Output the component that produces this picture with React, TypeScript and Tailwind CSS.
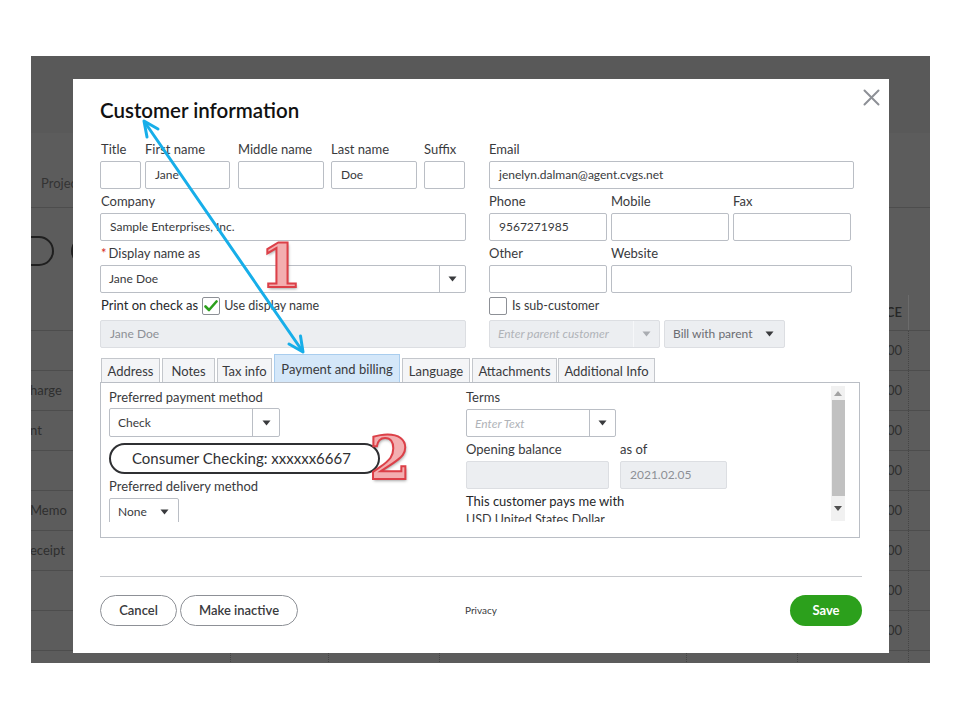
import React from "react";

const FONT = "font-['Lato','Open_Sans',sans-serif]";

function Caret({ light = false }: { light?: boolean }) {
  return (
    <svg width="9" height="6" viewBox="0 0 9 6">
      <path d="M0.5 0.5 L8.5 0.5 L4.5 5.5 Z" fill={light ? "#a9acb1" : "#393a3d"} />
    </svg>
  );
}

function Label({ children, className = "" }: { children: React.ReactNode; className?: string }) {
  return <div className={`h-[16px] leading-[16px] text-[13px] text-[#393a3d] whitespace-nowrap ${className}`}>{children}</div>;
}

function Input({
  children,
  className = "",
  disabled = false,
}: {
  children?: React.ReactNode;
  className?: string;
  disabled?: boolean;
}) {
  return (
    <div
      className={`h-[28px] shrink-0 border rounded-[2px] flex items-center pl-[9px] text-[12px] whitespace-nowrap overflow-hidden ${
        disabled ? "bg-[#eceef1] border-[#dcdee2] text-[#8d9096]" : "bg-white border-[#babec5] text-[#393a3d]"
      } ${className}`}
    >
      {children}
    </div>
  );
}

function Select({
  children,
  className = "",
  btn = "w-[26px]",
  disabled = false,
  lightCaret = false,
  divider = true,
}: {
  children?: React.ReactNode;
  className?: string;
  btn?: string;
  disabled?: boolean;
  lightCaret?: boolean;
  divider?: boolean;
}) {
  return (
    <div
      className={`h-[28px] shrink-0 border rounded-[2px] flex items-stretch text-[12px] whitespace-nowrap overflow-hidden ${
        disabled ? "bg-[#eceef1] border-[#dcdee2] text-[#8d9096]" : "bg-white border-[#babec5] text-[#393a3d]"
      } ${className}`}
    >
      <div className="flex-1 flex items-center pl-[8px] overflow-hidden">{children}</div>
      <div
        className={`${btn} flex items-center justify-center ${
          divider ? (disabled ? "border-l border-[#f6f7f9]" : "border-l border-[#babec5]") : ""
        }`}
      >
        <Caret light={lightCaret} />
      </div>
    </div>
  );
}

function Check({ checked = false }: { checked?: boolean }) {
  return (
    <div className="w-[18px] h-[18px] border border-[#8d9096] rounded-[2px] bg-white flex items-center justify-center">
      {checked && (
        <svg width="14" height="12" viewBox="0 0 14 12">
          <path d="M1.5 6.5 L5 10 L12.5 1.5" fill="none" stroke="#2ca01c" strokeWidth="2.6" strokeLinecap="round" strokeLinejoin="round" />
        </svg>
      )}
    </div>
  );
}

function Tab({ children, className = "", active = false }: { children: React.ReactNode; className?: string; active?: boolean }) {
  return (
    <div
      className={`flex items-center justify-center pt-[3px] text-[13px] text-[#393a3d] whitespace-nowrap border border-b-0 ${
        active ? "h-[28px] bg-[#d4e7f9] border-[#a9cdee]" : "h-[24px] bg-[#f4f5f7] border-[#c4c7cc]"
      } ${className}`}
    >
      {children}
    </div>
  );
}

function BgRow({ left = "", right = "", header = false, h = "h-[40px]" }: { left?: string; right?: string; header?: boolean; h?: string }) {
  const cell = header ? "border-r border-[#6b6b6b]" : "border-r border-dotted border-[#454545]";
  return (
    <div className={`${h} shrink-0 flex border-b border-[#4d4d4d] text-[13px] text-[#2e2e2e]`}>
      <div className={`w-[201px] ${cell} flex items-center -ml-[1px]`}>{left}</div>
      <div className={`w-[98px] ${cell}`} />
      <div className={`w-[111px] ${cell}`} />
      <div className={`w-[247px] ${cell}`} />
      <div className={`w-[111px] ${cell}`} />
      <div className={`w-[111px] ${cell} flex items-center justify-end pr-[6px] ${header ? "font-semibold text-[#262626]" : ""}`}>{right}</div>
      <div className="w-[20px]" />
    </div>
  );
}

export default function App() {
  return (
    <div className={`relative w-[960px] h-[720px] bg-white overflow-hidden ${FONT}`}>
      {/* dimmed background app */}
      <div className="ml-[31px] mt-[56px] w-[899px] h-[607px] bg-[#5c5c5c] flex flex-col overflow-hidden">
        <div className="h-[77px] bg-[#595959] shrink-0" />
        <div className="h-[75px] shrink-0 border-b border-[#4d4d4d] pl-[10px] pt-[42px] text-[13px] leading-[16px] text-[#333]">Projects</div>
        <div className="h-[87px] shrink-0 flex items-start pt-[28px]">
          <div className="-ml-[20px] w-[43px] h-[30px] rounded-full border-2 border-[#1f1f1f]" />
          <div className="ml-[17px] w-[60px] h-[30px] rounded-full border-2 border-[#1f1f1f]" />
        </div>
        <BgRow header right="CE" h="h-[36px]" />
        <BgRow right="00" />
        <BgRow left="harge" right="00" />
        <BgRow left="nt" right="00" />
        <BgRow right="00" />
        <BgRow left="Memo" right="00" />
        <BgRow left="eceipt" right="00" />
        <BgRow right="00" />
        <BgRow right="00" />
        <BgRow />
      </div>

      {/* modal */}
      <div className="absolute left-[73px] top-[79px] w-[816px] h-[574px] bg-white px-[27px] pt-[18px]">
        <button className="absolute left-[789px] top-[9px] w-[18px] h-[18px] flex items-center justify-center">
          <svg width="17" height="17" viewBox="0 0 17 17">
            <path d="M1.5 1.5 L15.5 15.5 M15.5 1.5 L1.5 15.5" stroke="#8d9096" strokeWidth="2" strokeLinecap="round" />
          </svg>
        </button>
        <div className="h-[26px] leading-[26px] text-[20.5px] font-semibold text-[#111]">Customer information</div>

        <div className="mt-[18px] flex gap-[23px]">
          {/* left column */}
          <div className="w-[366px] flex flex-col">
            <div className="flex">
              <div className="w-[41px]">
                <Label className="mb-[4px] ml-[1px]">Title</Label>
                <Input />
              </div>
              <div className="w-[85px] ml-[4px]">
                <Label className="mb-[4px]">First name</Label>
                <Input>Jane</Input>
              </div>
              <div className="w-[86px] ml-[8px]">
                <Label className="mb-[4px]">Middle name</Label>
                <Input />
              </div>
              <div className="w-[86px] ml-[7px]">
                <Label className="mb-[4px]">Last name</Label>
                <Input>Doe</Input>
              </div>
              <div className="w-[41px] ml-[7px]">
                <Label className="mb-[4px]">Suffix</Label>
                <Input />
              </div>
            </div>
            <Label className="mt-[4px] mb-[4px] ml-[1px]">Company</Label>
            <Input>Sample Enterprises, Inc.</Input>
            <Label className="mt-[4px] mb-[4px] ml-[1px]">
              <span className="text-[#d52b1e] mr-[2px]">*</span>Display name as
            </Label>
            <Select btn="w-[26px]">Jane Doe</Select>
            <div className="mt-[4px] h-[18px] flex items-center ml-[1px]">
              <span className="text-[13px] text-[#26272a] mr-[4px]">Print on check as</span>
              <Check checked />
              <span className="text-[12.5px] text-[#393a3d] ml-[4px]">Use display name</span>
            </div>
            <Input disabled className="mt-[5px]">Jane Doe</Input>
          </div>

          {/* right column */}
          <div className="w-[366px] flex flex-col">
            <Label className="mb-[4px]">Email</Label>
            <Input className="w-[365px]">jenelyn.dalman@agent.cvgs.net</Input>
            <div className="flex gap-[4px] mt-[4px]">
              <div className="w-[118px]">
                <Label className="mb-[4px]">Phone</Label>
                <Input>9567271985</Input>
              </div>
              <div className="w-[118px]">
                <Label className="mb-[4px]">Mobile</Label>
                <Input />
              </div>
              <div className="w-[118px]">
                <Label className="mb-[4px]">Fax</Label>
                <Input />
              </div>
            </div>
            <div className="flex gap-[4px] mt-[4px]">
              <div className="w-[118px]">
                <Label className="mb-[4px]">Other</Label>
                <Input />
              </div>
              <div className="w-[241px]">
                <Label className="mb-[4px]">Website</Label>
                <Input />
              </div>
            </div>
            <div className="mt-[4px] h-[18px] flex items-center">
              <Check />
              <span className="text-[12.5px] text-[#393a3d] ml-[5px]">Is sub-customer</span>
            </div>
            <div className="mt-[5px] flex gap-[4px]">
              <Select disabled lightCaret className="w-[171px]" btn="w-[26px]">
                <span className="italic text-[#b0b3b8]">Enter parent customer</span>
              </Select>
              <Select disabled divider={false} className="w-[121px]" btn="w-[30px]">
                <span className="text-[#6b6c72]">Bill with parent</span>
              </Select>
            </div>
          </div>
        </div>

        {/* tabs */}
        <div className="mt-[6px] h-[28px] flex items-end gap-[2px] ml-[1px]">
          <Tab className="w-[59px]">Address</Tab>
          <Tab className="w-[53px]">Notes</Tab>
          <Tab className="w-[55px]">Tax info</Tab>
          <Tab active className="w-[126px]">Payment and billing</Tab>
          <Tab className="w-[68px]">Language</Tab>
          <Tab className="w-[85px]">Attachments</Tab>
          <Tab className="w-[97px] -ml-[1px]">Additional Info</Tab>
        </div>
        <div className="w-[760px] h-[156px] border border-[#babec5] flex">
          <div className="flex-1 h-[139px] overflow-hidden flex pt-[6px]">
            <div className="w-[365px] pl-[8px] flex flex-col">
              <Label className="mb-[3px]">Preferred payment method</Label>
              <Select className="w-[171px] h-[29px]" btn="w-[27px]">
                <span className="pt-[1px]">Check</span>
              </Select>
              <div className="mt-[6px] w-[271px] h-[31px] shrink-0 rounded-full border-2 border-[#2f3033] flex items-center pl-[21px] text-[15px] text-[#2f3033] whitespace-nowrap">
                Consumer Checking: xxxxxx6667
              </div>
              <Label className="mt-[4px] mb-[4px]">Preferred delivery method</Label>
              <Select divider={false} className="w-[70px]" btn="w-[28px]">None</Select>
            </div>
            <div className="flex-1 flex flex-col">
              <Label className="mb-[4px]">Terms</Label>
              <Select className="w-[150px]" btn="w-[26px]">
                <span className="italic text-[#b0b3b8] pt-[1px]">Enter Text</span>
              </Select>
              <div className="flex mt-[4px]">
                <div className="w-[143px]">
                  <Label className="mb-[4px]">Opening balance</Label>
                  <Input disabled />
                </div>
                <div className="w-[107px] ml-[11px]">
                  <Label className="mb-[4px]">as of</Label>
                  <Input disabled>2021.02.05</Input>
                </div>
              </div>
              <Label className="mt-[4px] text-[#26272a]">This customer pays me with</Label>
              <div className="mt-[3px] text-[12.5px] leading-[16px] text-[#393a3d] whitespace-nowrap">USD United States Dollar</div>
            </div>
          </div>
          <div className="w-[14px] mr-[14px] mt-[3px] h-[135px] bg-[#f1f1f1] flex flex-col items-center">
            <div className="h-[14px] flex items-center justify-center">
              <svg width="8" height="5" viewBox="0 0 8 5"><path d="M0 5 L8 5 L4 0 Z" fill="#a3a3a3" /></svg>
            </div>
            <div className="w-[13px] h-[96px] bg-[#c1c1c1]" />
            <div className="flex-1 flex items-center justify-center">
              <svg width="8" height="5" viewBox="0 0 8 5"><path d="M0 0 L8 0 L4 5 Z" fill="#505050" /></svg>
            </div>
          </div>
        </div>

        {/* footer */}
        <div className="mt-[38px] border-t border-[#c6c8cc]" />
        <div className="mt-[18px] flex items-center">
          <button className="w-[77px] h-[31px] rounded-full border border-[#8d9096] text-[13px] font-semibold text-[#393a3d]">Cancel</button>
          <button className="ml-[3px] w-[118px] h-[31px] rounded-full border border-[#8d9096] text-[13px] font-semibold text-[#393a3d]">Make inactive</button>
          <div className="ml-[167px] text-[10px] text-[#393a3d]">Privacy</div>
          <div className="flex-1" />
          <button className="w-[72px] h-[31px] rounded-full bg-[#2ca01c] text-[13px] font-bold text-white">Save</button>
        </div>
      </div>

      {/* annotation overlays */}
      <svg className="absolute left-0 top-0 pointer-events-none" width="960" height="720" viewBox="0 0 960 720">
        <g stroke="#17aee9" strokeWidth="3" strokeLinecap="round" strokeLinejoin="round" fill="none">
          <path d="M146 124 L301 349" />
          <path d="M147 137 L144 121 L158 129" />
          <path d="M300.5 336 L303 352 L289 344" />
        </g>
      </svg>
      <div className="absolute left-[260px] top-[241px] text-[60px] leading-[50px] font-bold font-['DejaVu_Serif',serif] text-[#f3aeb0] [-webkit-text-stroke:2px_#dc4048] [text-shadow:1px_2px_3px_rgba(0,0,0,0.35)] pointer-events-none">
        1
      </div>
      <div className="absolute left-[369px] top-[433px] text-[60px] leading-[50px] font-bold font-['DejaVu_Serif',serif] text-[#f3aeb0] [-webkit-text-stroke:2px_#dc4048] [text-shadow:1px_2px_3px_rgba(0,0,0,0.35)] pointer-events-none">
        2
      </div>
    </div>
  );
}
